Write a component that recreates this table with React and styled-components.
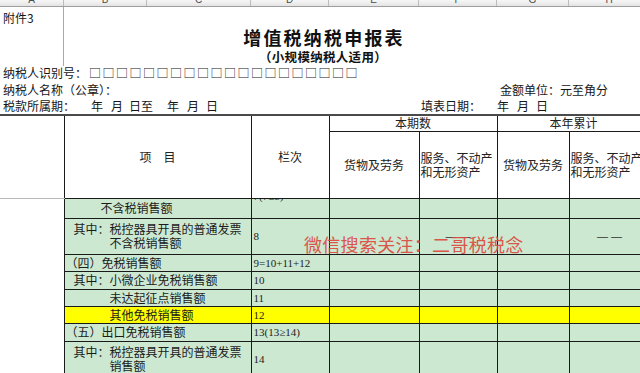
import React from "react";
import styled, { createGlobalStyle } from "styled-components";

const GlobalStyle = createGlobalStyle`
  html, body {
    margin: 0;
    padding: 0;
    background: #fff;
  }
  body {
    width: 640px;
    height: 373px;
    overflow: hidden;
    font-family: "Noto Sans CJK SC", "Noto Sans", sans-serif;
    color: #161616;
  }
`;

const COLUMNS = [
  { letter: "A", width: 64 },
  { letter: "B", width: 83 },
  { letter: "C", width: 104 },
  { letter: "D", width: 78 },
  { letter: "E", width: 90 },
  { letter: "F", width: 78 },
  { letter: "G", width: 72 },
  { letter: "H", width: 81 },
];

const GREEN = "#cde8d1";
const YELLOW = "#ffff00";

const ROWS = [
  { lines: ["不含税销售额"], indent: [35], code: "7(7≥8)", h: 20, clip: true },
  { lines: ["其中：税控器具开具的普通发票", "不含税销售额"], indent: [8, 44], code: "8", h: 36, dash: true },
  { lines: ["（四）免税销售额"], indent: [0], code: "9=10+11+12", h: 17 },
  { lines: ["其中：小微企业免税销售额"], indent: [8], code: "10", h: 18 },
  { lines: ["未达起征点销售额"], indent: [44], code: "11", h: 17 },
  { lines: ["其他免税销售额"], indent: [44], code: "12", h: 17, yellow: true },
  { lines: ["（五）出口免税销售额"], indent: [0], code: "13(13≥14)", h: 18 },
  { lines: ["其中：税控器具开具的普通发票", "销售额"], indent: [8, 44], code: "14", h: 36 },
];

const App = () => {
  return (
    <Sheet>
      <GlobalStyle />

      <ColumnStrip>
        {COLUMNS.map((c) => (
          <ColumnLetter key={c.letter} $w={c.width}>
            <span>{c.letter}</span>
          </ColumnLetter>
        ))}
      </ColumnStrip>

      <TopRow $h={20}>
        <ACell>附件3</ACell>
        <div />
      </TopRow>
      <TopRow $h={20}>
        <ACell />
        <Title>增值税纳税申报表</Title>
      </TopRow>
      <TopRow $h={18}>
        <ACell />
        <Subtitle>（小规模纳税人适用）</Subtitle>
      </TopRow>

      <FieldRow $h={16}>
        <FieldText>
          纳税人识别号：
          <Boxes>{"□".repeat(20)}</Boxes>
        </FieldText>
      </FieldRow>
      <FieldRow $h={17} $split={497}>
        <FieldText>纳税人名称（公章）：</FieldText>
        <FieldText>金额单位：元至角分</FieldText>
      </FieldRow>
      <FieldRow $h={16} $split={418}>
        <FieldText>
          税款所属期：
          <Part $gap={16}>年</Part>
          <Part $gap={8}>月</Part>
          <Part $gap={6}>日至</Part>
          <Part $gap={14}>年</Part>
          <Part $gap={8}>月</Part>
          <Part $gap={7}>日</Part>
        </FieldText>
        <FieldText>
          填表日期：
          <Part $gap={16}>年</Part>
          <Part $gap={8}>月</Part>
          <Part $gap={7}>日</Part>
        </FieldText>
      </FieldRow>

      <Table>
        <colgroup>
          <col style={{ width: 64 }} />
          <col style={{ width: 187 }} />
          <col style={{ width: 78 }} />
          <col style={{ width: 90 }} />
          <col style={{ width: 78 }} />
          <col style={{ width: 72 }} />
          <col style={{ width: 81 }} />
        </colgroup>
        <tbody>
          <tr style={{ height: 16 }}>
            <SideCell rowSpan={2} $top />
            <HeadCell rowSpan={2} $top>项　目</HeadCell>
            <HeadCell rowSpan={2} $top>栏次</HeadCell>
            <HeadCell colSpan={2} $top>本期数</HeadCell>
            <HeadCell colSpan={2} $top>本年累计</HeadCell>
          </tr>
          <tr style={{ height: 67 }}>
            <HeadCell>货物及劳务</HeadCell>
            <HeadCell $left>
              服务、不动产
              <br />
              和无形资产
            </HeadCell>
            <HeadCell>货物及劳务</HeadCell>
            <HeadCell $left>
              服务、不动产
              <br />
              和无形资产
            </HeadCell>
          </tr>

          {ROWS.map((r, i) => {
            const fill = r.yellow ? YELLOW : GREEN;
            return (
              <tr key={i} style={{ height: r.h }}>
                {i === 0 && <SideCell rowSpan={ROWS.length} $body />}
                <LabelCell $fill={fill}>
                  {r.lines.map((l, j) => (
                    <LabelLine key={j} $indent={r.indent[j]}>
                      {l}
                    </LabelLine>
                  ))}
                </LabelCell>
                <CodeCell $fill={fill} $clip={r.clip}>
                  {r.clip ? (
                    <Clip $h={r.h}>
                      <span>{r.code}</span>
                    </Clip>
                  ) : (
                    r.code
                  )}
                </CodeCell>
                <DataCell $fill={fill} />
                <DataCell $fill={fill}>{r.dash ? "— —" : ""}</DataCell>
                <DataCell $fill={fill} />
                <DataCell $fill={fill}>{r.dash ? "— —" : ""}</DataCell>
              </tr>
            );
          })}
        </tbody>
      </Table>

      <Watermark>微信搜索关注：二哥税税念</Watermark>
    </Sheet>
  );
};

export default App;

const Sheet = styled.div`
  position: relative;
  width: 640px;
  height: 373px;
  overflow: hidden;
  background: #fff;
`;

const ColumnStrip = styled.div`
  display: flex;
  height: 7px;
  background: linear-gradient(#f7f7f7, #e4e4e4);
  border-bottom: 1px solid #9e9e9e;
  box-sizing: border-box;
`;

const ColumnLetter = styled.div`
  flex: 0 0 ${(p) => p.$w}px;
  box-sizing: border-box;
  border-right: 1px solid #bcbcbc;
  overflow: hidden;
  text-align: center;
  font-family: "Liberation Sans", Arial, sans-serif;
  font-size: 10px;
  line-height: 10px;
  color: #4a4a4a;

  span {
    display: block;
    margin-top: -5px;
  }
`;

const TopRow = styled.div`
  display: grid;
  grid-template-columns: 64px 1fr;
  height: ${(p) => p.$h}px;
`;

const ACell = styled.div`
  display: flex;
  align-items: center;
  padding-left: 3px;
  border-right: 1px solid #a8a8a8;
  font-size: 12px;
  white-space: nowrap;
`;

const Title = styled.div`
  display: flex;
  align-items: flex-end;
  justify-content: center;
  padding-right: 56px;
  font-size: 18px;
  font-weight: 700;
  letter-spacing: 2.2px;
  line-height: 20px;
  color: #111;
`;

const Subtitle = styled.div`
  display: flex;
  align-items: center;
  justify-content: center;
  padding-right: 58px;
  font-size: 12.5px;
  font-weight: 700;
  letter-spacing: 0.3px;
  color: #111;
`;

const FieldRow = styled.div`
  display: grid;
  grid-template-columns: ${(p) => (p.$split ? `${p.$split}px 1fr` : "1fr")};
  align-items: center;
  height: ${(p) => p.$h}px;
  padding-left: 3px;
`;

const FieldText = styled.div`
  display: flex;
  align-items: center;
  font-size: 12px;
  line-height: 14px;
  white-space: nowrap;
`;

const Boxes = styled.span`
  margin-left: 2px;
  letter-spacing: 1.5px;
  font-size: 12px;
  color: #222;
`;

const Part = styled.span`
  margin-left: ${(p) => p.$gap}px;
`;

const Table = styled.table`
  border-collapse: collapse;
  table-layout: fixed;
  width: 650px;
  font-size: 12px;
  line-height: 14px;
`;

const SideCell = styled.td`
  padding: 0;
  background: #fff;
  border-left: none;
  border-right: 1px solid #1a1a1a;
  border-top: ${(p) => (p.$top ? "2px solid #4a4a4a" : "1px solid #b9b9b9")};
  border-bottom: ${(p) => (p.$top ? "1px solid #b9b9b9" : "none")};
`;

const HeadCell = styled.td`
  padding: 0 1px;
  background: #fff;
  border: 1px solid #1a1a1a;
  border-top: ${(p) => (p.$top ? "2px solid #4a4a4a" : "1px solid #1a1a1a")};
  text-align: ${(p) => (p.$left ? "left" : "center")};
  vertical-align: middle;
  white-space: nowrap;
  overflow: hidden;
  color: #222;
`;

const LabelCell = styled.td`
  padding: 0 0 0 1px;
  background: ${(p) => p.$fill};
  border: 1px solid #1a1a1a;
  vertical-align: middle;
  white-space: nowrap;
  overflow: hidden;
  color: #1c1c1c;
`;

const LabelLine = styled.div`
  padding-left: ${(p) => p.$indent}px;
  line-height: 14px;
`;

const CodeCell = styled.td`
  padding: 0 2px;
  background: ${(p) => p.$fill};
  border: 1px solid #1a1a1a;
  vertical-align: ${(p) => (p.$clip ? "top" : "middle")};
  font-family: "Liberation Serif", "Times New Roman", serif;
  font-size: 11px;
  white-space: nowrap;
  overflow: hidden;
  color: #222;
`;

const Clip = styled.div`
  height: ${(p) => p.$h - 1}px;
  overflow: hidden;

  span {
    display: block;
    margin-top: -9px;
    line-height: 12px;
  }
`;

const DataCell = styled.td`
  padding: 0;
  background: ${(p) => p.$fill};
  border: 1px solid #1a1a1a;
  text-align: center;
  vertical-align: middle;
  font-family: "Liberation Sans", Arial, sans-serif;
  font-size: 11px;
  color: #333;
  white-space: nowrap;
  overflow: hidden;
`;

const Watermark = styled.div`
  position: absolute;
  left: 304px;
  top: 234px;
  font-size: 18px;
  line-height: 20px;
  letter-spacing: 0.3px;
  color: #dc4a40;
  white-space: nowrap;
  opacity: 0.92;
`;
